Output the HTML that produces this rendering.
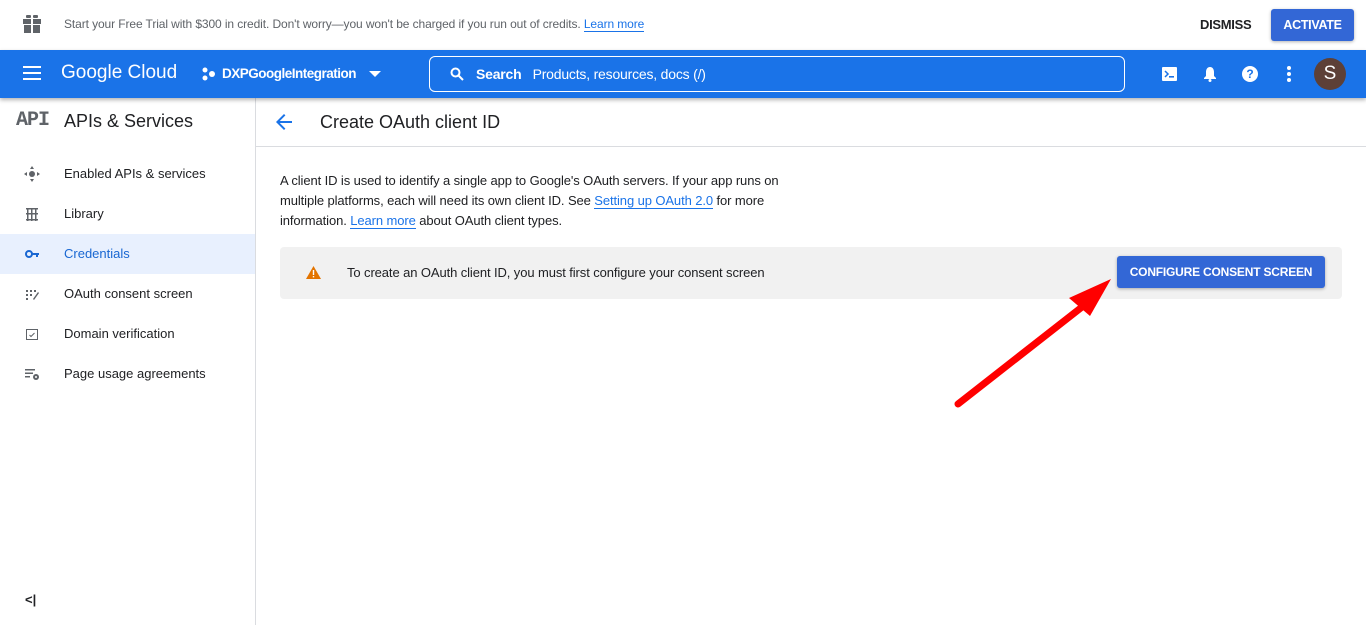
<!DOCTYPE html>
<html><head><meta charset="utf-8"><style>
*{margin:0;padding:0;box-sizing:border-box}
body{width:1366px;height:625px;overflow:hidden;font-family:"Liberation Sans",Arial,sans-serif;background:#fff;position:relative;color:#202124}
.abs{position:absolute}
.banner{top:0;left:0;width:1366px;height:50px;background:#fff}
.topbar{top:50px;left:0;width:1366px;height:48px;background:#1a73e8;box-shadow:0 2px 4px rgba(0,0,0,.3);z-index:2}
.side{top:98px;left:0;width:256px;height:527px;border-right:1px solid #dadce0}
.nav{position:absolute;left:0;width:255px;height:40px;font-size:13px;line-height:40px;padding-left:64px;color:#202124}
.nav.act{background:#e8f0fe;color:#1967d2}
.ic{position:absolute;left:24px;top:12px;width:16px;height:16px}
a{color:#1a73e8;text-decoration:none;border-bottom:1px solid #1a73e8}
</style></head><body>
<div class="abs banner">
  <svg class="abs" style="left:23px;top:15px" width="18" height="18" viewBox="0 0 18 18"><rect x="0" y="4" width="18" height="5" fill="#5f6368"/><rect x="1" y="10" width="16" height="8" fill="#5f6368"/><rect x="8" y="4" width="2" height="14" fill="#fff"/><rect x="3" y="0" width="5" height="3" rx="1" fill="#5f6368"/><rect x="10" y="0" width="5" height="3" rx="1" fill="#5f6368"/></svg>
  <div class="abs" style="left:64px;top:17px;font-size:12px;color:#5f6368;letter-spacing:-0.1px">Start your Free Trial with $300 in credit. Don't worry—you won't be charged if you run out of credits. <a>Learn more</a></div>
  <div class="abs" style="left:1200px;top:17px;font-size:13px;font-weight:bold;color:#202124;letter-spacing:-0.3px">DISMISS</div>
  <div class="abs" style="left:1271px;top:9px;width:83px;height:32px;background:#3367d6;border-radius:3px;color:#fff;font-size:12.5px;font-weight:bold;text-align:center;line-height:32px;box-shadow:0 1px 3px rgba(0,0,0,.3);letter-spacing:-0.3px">ACTIVATE</div>
</div>
<div class="abs topbar">
  <svg class="abs" style="left:23px;top:16px" width="18" height="14"><rect y="0" width="18" height="2" fill="#fff"/><rect y="6" width="18" height="2" fill="#fff"/><rect y="12" width="18" height="2" fill="#fff"/></svg>
  <div class="abs" style="left:61px;top:12px;font-size:19px;color:#fff">Google Cloud</div>
  <svg class="abs" style="left:201px;top:17px" width="16" height="14"><circle cx="4" cy="3" r="2.5" fill="#fff"/><circle cx="4" cy="11" r="2.5" fill="#fff"/><circle cx="11" cy="7" r="3" fill="#fff"/></svg>
  <div class="abs" style="left:222px;top:16px;font-size:13.5px;font-weight:bold;color:#fff;letter-spacing:-0.5px">DXPGoogleIntegration</div>
  <svg class="abs" style="left:369px;top:21px" width="12" height="7"><path d="M0 0L12 0L6 6Z" fill="#fff"/></svg>
  <div class="abs" style="left:429px;top:6px;width:696px;height:36px;border:1px solid #fff;border-radius:6px"></div>
  <svg class="abs" style="left:450px;top:17px" width="14" height="15" viewBox="0 0 14 15"><circle cx="5.5" cy="5.5" r="4" stroke="#fff" stroke-width="2" fill="none"/><path d="M8.5 8.5L13 13" stroke="#fff" stroke-width="2"/></svg>
  <div class="abs" style="left:476px;top:16px;font-size:14px;color:#fff;letter-spacing:-0.2px"><b>Search</b>&nbsp;&nbsp; Products, resources, docs (/)</div>
  <svg class="abs" style="left:1162px;top:17px" width="15" height="14"><rect width="15" height="14" rx="1" fill="#fff"/><path d="M3 4L6 7L3 10" stroke="#1a73e8" stroke-width="1.5" fill="none"/><rect x="7" y="9" width="5" height="1.6" fill="#1a73e8"/></svg>
  <svg class="abs" style="left:1203px;top:16px" width="14" height="16"><path d="M7 1C4 1 3 4 3 6V10L1 12V13H13V12L11 10V6C11 4 10 1 7 1Z" fill="#fff"/><circle cx="7" cy="14.5" r="1.5" fill="#fff"/></svg>
  <div class="abs" style="left:1242px;top:16px;width:16px;height:16px;border-radius:50%;background:#fff;color:#1a73e8;font-size:12px;font-weight:bold;text-align:center;line-height:16px">?</div>
  <svg class="abs" style="left:1287px;top:15px" width="4" height="18"><circle cx="2" cy="3" r="2" fill="#fff"/><circle cx="2" cy="9" r="2" fill="#fff"/><circle cx="2" cy="15" r="2" fill="#fff"/></svg>
  <div class="abs" style="left:1314px;top:8px;width:32px;height:32px;border-radius:50%;background:#5d4037;color:#fff;font-size:19px;text-align:center;line-height:32px">S</div>
</div>
<div class="abs side">
  <div class="abs" style="left:16px;top:11px;font-family:'Liberation Mono',monospace;font-weight:bold;font-size:20px;color:#5f6368;letter-spacing:-1px">API</div>
  <div class="abs" style="left:64px;top:13px;font-size:18px;color:#202124">APIs &amp; Services</div>
  <div class="nav" style="top:56px"><svg class="ic" viewBox="0 0 16 16"><circle cx="8" cy="8" r="3" fill="#5f6368"/><path d="M8 0L10 3H6Z M8 16L6 13H10Z M0 8L3 6V10Z M16 8L13 10V6Z" fill="#5f6368"/></svg>Enabled APIs &amp; services</div>
  <div class="nav" style="top:96px"><svg class="ic" viewBox="0 0 16 16"><path d="M2 2h12v1.5H2zM2 7h12v1.5H2zM2 13h12v1.5H2z M3 2h1.5v13H3z M7 2h1.5v13H7z M11 2h1.5v13H11z" fill="#5f6368"/></svg>Library</div>
  <div class="nav act" style="top:136px"><svg class="ic" viewBox="0 0 16 16"><circle cx="5" cy="8" r="3" stroke="#1967d2" stroke-width="2" fill="none"/><path d="M8 7h7v2h-1v2h-2V9H8z" fill="#1967d2"/></svg>Credentials</div>
  <div class="nav" style="top:176px"><svg class="ic" viewBox="0 0 16 16"><g fill="#5f6368"><rect x="2" y="4" width="2" height="2"/><rect x="6" y="4" width="2" height="2"/><rect x="10" y="4" width="2" height="2"/><rect x="2" y="8" width="2" height="2"/><rect x="6" y="8" width="2" height="2"/><rect x="2" y="12" width="2" height="2"/><path d="M9 13L14 6L15 7L10 14Z"/></g></svg>OAuth consent screen</div>
  <div class="nav" style="top:216px"><svg class="ic" viewBox="0 0 16 16"><rect x="2.5" y="3.5" width="11" height="10" stroke="#5f6368" fill="none"/><path d="M5.5 9L7 10.5L10.5 7" stroke="#5f6368" fill="none"/></svg>Domain verification</div>
  <div class="nav" style="top:256px"><svg class="ic" viewBox="0 0 16 16"><g fill="#5f6368"><rect x="1" y="3" width="10" height="1.5"/><rect x="1" y="6.5" width="8" height="1.5"/><rect x="1" y="10" width="5" height="1.5"/><circle cx="12" cy="11" r="3"/></g><circle cx="12" cy="11" r="1" fill="#fff"/></svg>Page usage agreements</div>
  <div class="abs" style="left:25px;top:494px;font-size:13px;font-weight:bold;color:#202124">&lt;|</div>
</div>
<div class="abs" style="left:256px;top:98px;width:1110px;height:49px;border-bottom:1px solid #dadce0">
  <svg class="abs" style="left:20px;top:16px" width="16" height="16"><path d="M16 7H3.8L9.4 1.4L8 0L0 8L8 16L9.4 14.6L3.8 9H16Z" fill="#1a73e8"/></svg>
  <div class="abs" style="left:64px;top:14px;font-size:18px;color:#202124">Create OAuth client ID</div>
</div>
<div class="abs" style="left:280px;top:171px;width:530px;font-size:13px;line-height:20px;color:#202124;letter-spacing:-0.1px">A client ID is used to identify a single app to Google's OAuth servers. If your app runs on multiple platforms, each will need its own client ID. See <a>Setting up OAuth 2.0</a> for more information. <a>Learn more</a> about OAuth client types.</div>
<div class="abs" style="left:280px;top:247px;width:1062px;height:52px;background:#f1f1f1;border-radius:4px">
  <svg class="abs" style="left:26px;top:19px" width="15" height="13"><path d="M7.5 0L15 13H0Z" fill="#e37400"/><rect x="6.8" y="4" width="1.4" height="5" fill="#fff"/><rect x="6.8" y="10" width="1.4" height="1.4" fill="#fff"/></svg>
  <div class="abs" style="left:67px;top:18px;font-size:13px;color:#202124;letter-spacing:-0.1px">To create an OAuth client ID, you must first configure your consent screen</div>
  <div class="abs" style="left:837px;top:9px;width:208px;height:32px;background:#3367d6;border-radius:3px;color:#fff;font-size:12px;font-weight:bold;text-align:center;line-height:32px;box-shadow:0 1px 3px rgba(0,0,0,.3);letter-spacing:-0.2px">CONFIGURE CONSENT SCREEN</div>
</div>
<svg class="abs" style="left:0;top:0;z-index:3" width="1366" height="625"><path d="M958 404L1082 307" stroke="#f00" stroke-width="7" stroke-linecap="round"/><path d="M1111 279L1069 298L1090 316Z" fill="#f00"/></svg>
</body></html>
